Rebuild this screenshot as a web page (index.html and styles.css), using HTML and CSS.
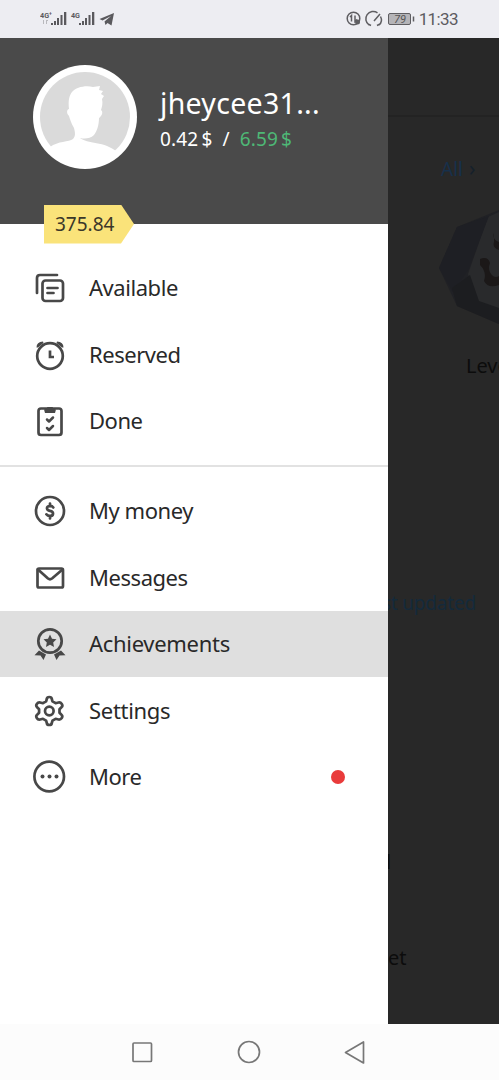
FILE: index.html
```html
<!DOCTYPE html>
<html lang="en">
<head>
<meta charset="utf-8">
<title>Menu</title>
<link rel="stylesheet" href="styles.css">
</head>
<body>
<div class="screen">
  <header class="status">
    <div class="status-left">
      <svg width="76" height="20" viewBox="0 0 76 20" fill="#5a595d">
        <g class="net"><text x="0" y="9" textLength="12" lengthAdjust="spacingAndGlyphs">4G⁺</text><text x="31" y="9" textLength="9" lengthAdjust="spacingAndGlyphs">4G</text></g>
        <path d="M11 14h2v2h-2zM14 12h2v4h-2zM17 9h2v7h-2zM20.500 6h2v10h-2zM24 3h2.300v13H24zM39 14h2v2h-2zM42 12h2v4h-2zM45 9h2v7h-2zM48.500 6h2v10h-2zM52 3h2.300v13H52z"/>
        <path d="M3 11h1v4H3zM6 11h2v1H7v3H6z" opacity=".35"/>
        <path d="M59.500 10 74 4 71.500 16.500 67.500 14 65.500 16 64.500 12.500 71 7 62.500 11.500z"/>
      </svg>
    </div>
    <div class="status-right">
      <svg width="70" height="20" viewBox="0 0 70 20" fill="none" stroke="#5f5e62" stroke-width="1.500">
        <circle cx="7.500" cy="9.500" r="6.300"/><path d="M5.500 12.500V6.500L4 8M9 6.500v6l2-2"/><circle cx="11.500" cy="13" r="2.500" fill="#5f5e62" stroke="none"/>
        <path d="M23 16A7 7 0 1 1 31.500 3.800M34.500 7.500A7 7 0 0 1 33 16M28 12 34 5M22 15l3 1.500M31 16.500l3-1.500"/>
        <rect x="42.500" y="4.500" width="22" height="11" rx="1.500" fill="#b5b4b8" stroke-width="1"/><path d="M67.500 7.500v5"/>
        <text class="battery" x="48" y="14" textLength="12">79</text>
      </svg>
      <span class="clock">11:33</span>
    </div>
  </header>

  <main class="body">
    <aside class="drawer">
      <div class="profile">
        <svg class="avatar" width="104" height="104" viewBox="0 0 104 104">
          <circle cx="52" cy="52" r="52" fill="#fff"/><circle cx="52" cy="52" r="45" fill="#dadada"/>
          <path d="M17 82C25 76 36 77 40 74C43 71 42 67 41 63C38 58 37 54 36 51C33 48 34 44 36 44C35 36 36 31 39 27C43 22 53 20 60 22L67 21L66 25L70 26L68 29L71 31L69 34C70 38 69 42 68 45C71 47 68 52 66 53C66 60 64 66 61 70C57 74 51 74 47 73C54 79 72 76 84 87C68 102 34 102 17 82Z" fill="#fff"/>
        </svg>
        <div class="who">
          <div class="name">jheycee31...</div>
          <div class="balance"><span>0.42 $</span><span>/</span><span class="pending">6.59 $</span></div>
        </div>
        <div class="rating">375.84</div>
      </div>
      <nav>
        <ul class="group first">
          <li class="item"><svg class="icon" viewBox="0 0 34 34"><path d="M4 22V7Q4 4 7 4H24"/><rect x="9.500" y="9.500" width="20.500" height="20.500" rx="3"/><path d="M14.500 17h10M14.500 22h6"/></svg><span class="label">Available</span></li>
          <li class="item"><svg class="icon" viewBox="0 0 34 34"><circle cx="17" cy="18" r="12.800"/><path d="M17 12.500V19h4" stroke-linecap="butt" stroke-linejoin="miter"/><path class="solid" d="M3.500 9.500Q3.500 4 10 3.500L10.500 5 5 9.500zM30.500 9.500Q30.500 4 24 3.500L23.500 5 29 9.500z"/></svg><span class="label">Reserved</span></li>
          <li class="item"><svg class="icon" viewBox="0 0 34 34"><rect x="5.500" y="4.500" width="23" height="26.500" rx="2.500"/><path class="solid" d="M11 5.500Q14 5 14.500 3h5Q20 5 23 5.500L22 9H12z"/><path class="check" d="m14 15.500 2 2 4-4M14 24l2 2 4-4"/></svg><span class="label">Done</span></li>
        </ul>
        <ul class="group">
          <li class="item"><svg class="icon" viewBox="0 0 34 34"><circle cx="17" cy="17" r="14"/><path d="M20.300 13.500Q19 11.700 16.800 12Q13.800 12.200 14 14.500Q14.300 16.300 17 16.900Q20.300 17.700 20 20Q19.700 22 17 22Q14.500 22 13.400 20.300M17 9.500v2.800M17 21.800v2.700"/></svg><span class="label">My money</span></li>
          <li class="item"><svg class="icon" viewBox="0 0 34 34"><rect x="4.500" y="7.500" width="25.500" height="19" rx="1.500"/><path d="M5 8.500 15 17.500Q17 19 19 17.500L29.500 8.500"/></svg><span class="label">Messages</span></li>
          <li class="item active"><svg class="icon" viewBox="0 0 34 34"><circle cx="17" cy="14" r="11.700"/><path class="solid" d="m17 7.500 2 4.200 4.500.6-3.300 3.100.8 4.600-4-2.200-4 2.200.8-4.600-3.300-3.100 4.500-.6zM6 23.500l7 4-2.500 5.500-3-4.500-6-.2zM28 23.500l-7 4 2.500 5.500 3-4.500 6-.2z"/></svg><span class="label wide">Achievements</span></li>
          <li class="item"><svg class="icon" viewBox="0 0 34 34"><path d="M13.800 5Q14 3 16.300 3T18.800 5L19.500 7.400 22.600 9.200 25.500 8.500Q27.500 8 28.800 10T28.500 13.200L26.500 15.200V18.800L28.500 20.800Q30 22.200 28.800 24T25.500 25.500L22.600 24.800 19.500 26.600 18.800 29Q18.600 31 16.300 31T13.800 29L13.100 26.600 10 24.800 7.100 25.500Q5 26 3.800 24T4.100 20.800L6.100 18.800V15.200L4.100 13.200Q2.600 11.800 3.800 10T7.100 8.500L10 9.200 13.100 7.400Z"/><circle cx="16.300" cy="17" r="4.300"/></svg><span class="label wide">Settings</span></li>
          <li class="item"><svg class="icon" viewBox="0 0 34 34"><circle cx="16.200" cy="16.500" r="14.800"/><g class="solid"><circle cx="9.500" cy="16.500" r="2"/><circle cx="16.500" cy="16.500" r="2"/><circle cx="23.500" cy="16.500" r="2"/></g></svg><span class="label">More</span><i class="dot"></i></li>
        </ul>
      </nav>
    </aside>
    <section class="behind">
      <div class="toolbar"></div>
      <div class="all">All <span class="chevron">›</span></div>
      <svg class="badge" width="61" height="120" viewBox="0 0 61 120">
        <path d="M1 61 19 20 61 3V117L19 99z" fill="#202125"/>
        <path d="M50 10 61 5V104L39 98 30 67z" fill="#292a2c"/>
        <path d="M19 20 51 9 30 63 15 85 1 61z" fill="#1e1f24"/>
        <path d="M14 81 32 68 41 94 61 101V117L19 99z" fill="#1c1d20"/>
        <path d="M42 52Q50 49 52 56Q49 64 55 69Q58 71 61 69V78Q50 82 46 74Q49 65 42 58ZM56 26Q54 33 61 35V43Q54 41 56 35Z" fill="#1b1818"/>
      </svg>
      <div class="level">Level</div>
      <div class="updated">st updated</div>
      <div class="tail">l</div>
      <div class="market">et</div>
    </section>
  </main>

  <footer class="system">
    <svg width="240" height="28" viewBox="0 0 240 28" fill="none" stroke="#777" stroke-width="1.700">
      <rect x="4" y="5" width="18.500" height="18.500" rx="1"/><circle cx="120" cy="14" r="10.500"/><path d="M234.500 4V25L216.500 14.500z" stroke-linejoin="round"/>
    </svg>
  </footer>
</div>
</body>
</html>
```

FILE: styles.css
```css
* { box-sizing: border-box; }
body { margin: 0; font-family: "Noto Sans", sans-serif; color: #292929; }
.screen { width: 499px; height: 1080px; display: flex; flex-direction: column; overflow: hidden; background: #fcfcfc; }
.status { height: 37.500px; flex: none; background: #ededf2; display: flex; justify-content: space-between; padding: 9px 41px 0 40px; }
.status-right { display: flex; gap: 3px; }
.net { font: 700 8px Roboto, sans-serif; }
.battery { font: italic 11px Roboto, sans-serif; fill: #555; stroke: none; }
.clock { font: 17px/20px Roboto, sans-serif; color: #5c5b60; letter-spacing: -.6px; white-space: nowrap; }
.body { height: 986.500px; flex: none; display: flex; background: #282828; }
.drawer { width: 388px; flex: none; background: #fff; }
.profile { height: 186.500px; background: #4a4a4a; position: relative; display: flex; padding: 27px 0 0 33px; gap: 22px; }
.avatar { flex: none; }
.who { padding: 20px 0 0 1px; color: #fff; }
.name { font-size: 28.500px; line-height: 36px; letter-spacing: .3px; white-space: nowrap; }
.balance { display: flex; gap: 10px; font-size: 19px; line-height: 26px; margin-top: 5px; letter-spacing: .15px; word-spacing: -2px; white-space: nowrap; }
.pending { color: #4eb876; }
.rating { position: absolute; left: 44px; top: 167px; width: 90px; height: 39px; padding-left: 11px; background: #fae37a; color: #3b3729; font-size: 19px; line-height: 39px; clip-path: polygon(0 0, 77px 0, 100% 50%, 77px 100%, 0 100%); }
.group { list-style: none; margin: 0; padding: 11.500px 0; }
.first { padding: 31px 0 10.500px; border-bottom: 2px solid #e2e2e2; }
.item { height: 66.400px; display: flex; align-items: center; gap: 22px; padding: 0 43px 0 33px; font-size: 22px; }
.label { letter-spacing: -.45px; padding-bottom: 2px; }
.wide { letter-spacing: -.3px; }
.active { background: #dfdfdf; }
.icon { width: 34px; height: 34px; flex: none; fill: none; stroke: #484848; stroke-width: 2.700; stroke-linecap: round; stroke-linejoin: round; }
.solid { fill: #484848; stroke: none; }
.check { stroke-width: 2.500; }
.dot { width: 14px; height: 14px; border-radius: 50%; background: #e93b3b; margin-left: auto; }
.behind { flex: 1; min-width: 0; overflow: hidden; color: #0c0c0c; font-size: 20px; line-height: 28px; }
.toolbar { height: 79px; border-bottom: 2px solid #232323; }
.all { margin: 38px 0 0 53px; color: #17304b; font-size: 19px; word-spacing: 1px; }
.chevron { color: #15202b; font-size: 21px; line-height: 1; }
.badge { display: block; margin: 24px 0 0 50px; }
.level { margin: 25px 0 0 78px; }
.updated { margin: 209px 0 0 -6px; color: #142a3b; font-size: 19px; letter-spacing: -.2px; white-space: nowrap; }
.tail { margin: 231px 0 0 -2px; }
.market { margin: 68px 0 0 0; }
.system { flex: 1; display: flex; justify-content: center; align-items: center; padding-right: 1px; }
```
